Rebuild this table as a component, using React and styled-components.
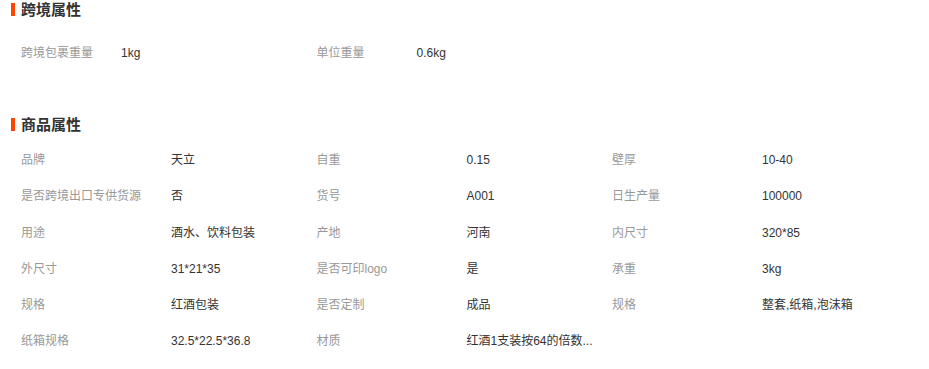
import React from 'react';
import styled, { createGlobalStyle } from 'styled-components';

const crossBorder = [
    { label: '跨境包裹重量', value: '1kg' },
    { label: '单位重量', value: '0.6kg' },
];

const goods = [
    { label: '品牌', value: '天立' },
    { label: '自重', value: '0.15' },
    { label: '壁厚', value: '10-40' },
    { label: '是否跨境出口专供货源', value: '否' },
    { label: '货号', value: 'A001' },
    { label: '日生产量', value: '100000' },
    { label: '用途', value: '酒水、饮料包装' },
    { label: '产地', value: '河南' },
    { label: '内尺寸', value: '320*85' },
    { label: '外尺寸', value: '31*21*35' },
    { label: '是否可印logo', value: '是' },
    { label: '承重', value: '3kg' },
    { label: '规格', value: '红酒包装' },
    { label: '是否定制', value: '成品' },
    { label: '规格', value: '整套,纸箱,泡沫箱' },
    { label: '纸箱规格', value: '32.5*22.5*36.8' },
    { label: '材质', value: '红酒1支装按64的倍数...' },
];

const Global = createGlobalStyle`
    body{
        margin:0;
        background:#fff;
        font-family:"Liberation Sans", Arial, "Noto Sans CJK SC", sans-serif;
    }
`

const Section = ({ title, items, labelWidth, gap, cols }) => (
    <Block>
        <Title>{title}</Title>
        <List $gap={gap} $cols={cols}>
            {items.map((item, idx) => (
                <Item key={idx}>
                    <Label $w={labelWidth}>{item.label}</Label>
                    <Value>{item.value}</Value>
                </Item>
            ))}
        </List>
    </Block>
);

const App = () => {
    return (
        <Page>
            <Global />
            <Section title="跨境属性" items={crossBorder} labelWidth={100} gap={15} cols={2} />
            <Spacer />
            <Section title="商品属性" items={goods} labelWidth={150} gap={7} cols={3} />
        </Page>
    );
}

const Page = styled.div`
    width:929px;
    height:369px;
    overflow:hidden;
`

const Block = styled.div`
    width:100%;
`

const Spacer = styled.div`
    height:44px;
`

const Title = styled.h3`
    margin:0;
    height:20px;
    line-height:20px;
    padding-left:21px;
    position:relative;
    font-size:15px;
    font-weight:bold;
    color:#333;

    &::before{
        content:'';
        position:absolute;
        left:11px;
        top:3px;
        width:4px;
        height:13px;
        background:#ff4400;
    }
`

const List = styled.div`
    display:grid;
    grid-template-columns:repeat(${p => p.$cols}, 295.5px);
    padding:${p => p.$gap}px 0 0 21px;
`

const Item = styled.div`
    display:flex;
    height:36.2px;
    line-height:36px;
    font-size:12px;
    white-space:nowrap;
`

const Label = styled.span`
    width:${p => p.$w}px;
    flex-shrink:0;
    color:#999;
`

const Value = styled.span`
    color:#333;
`

export default App
